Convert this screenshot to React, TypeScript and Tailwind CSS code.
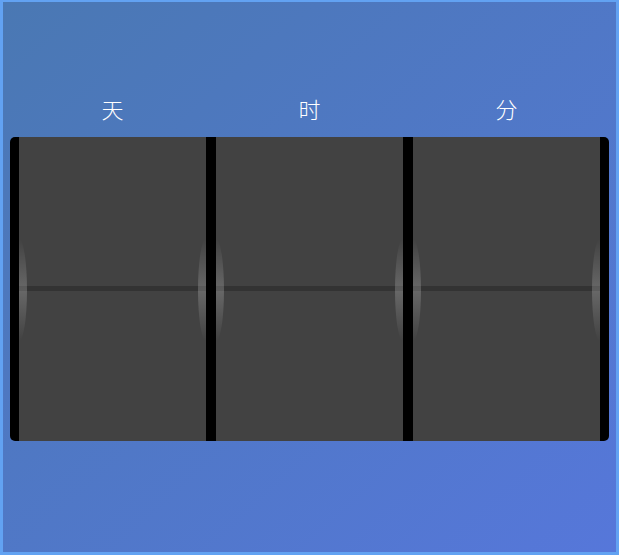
import React from 'react';

const labels = ['天', '时', '分'];

function FlipCard() {
  return (
    <div className="relative flex flex-1 flex-col bg-[#424242]">
      <div className="h-[149px]" />
      <div className="h-[5px] bg-[#333333]" />
      <div className="flex-1" />
      {/* side glows around the hinge */}
      <div className="pointer-events-none absolute left-0 top-[102px] h-[102px] w-[8px] rounded-[0_100%_100%_0/0_50%_50%_0] bg-gradient-to-b from-white/0 via-white/20 to-white/0" />
      <div className="pointer-events-none absolute right-0 top-[102px] h-[102px] w-[8px] rounded-[100%_0_0_100%/50%_0_0_50%] bg-gradient-to-b from-white/0 via-white/20 to-white/0" />
    </div>
  );
}

export default function App() {
  return (
    <div
      className="h-[555px] w-[619px] border-b-[3px] border-l-[3px] border-r-[3px] border-t-2 border-[#62a2f2] bg-gradient-to-br from-[#4a78b3] to-[#5677da] px-[7px] pt-[91px]"
      style={{ fontFamily: '"Noto Sans CJK SC", "Noto Sans", sans-serif' }}
    >
      <div className="mb-[14px] flex gap-[10px] px-[9px]">
        {labels.map(label => (
          <div key={label} className="h-[30px] flex-1 text-center text-[22px] font-light leading-[30px] text-white">
            {label}
          </div>
        ))}
      </div>

      <div className="flex h-[304px] gap-[10px] rounded-[5px] bg-black px-[9px]">
        {labels.map(label => (
          <FlipCard key={label} />
        ))}
      </div>
    </div>
  );
}
